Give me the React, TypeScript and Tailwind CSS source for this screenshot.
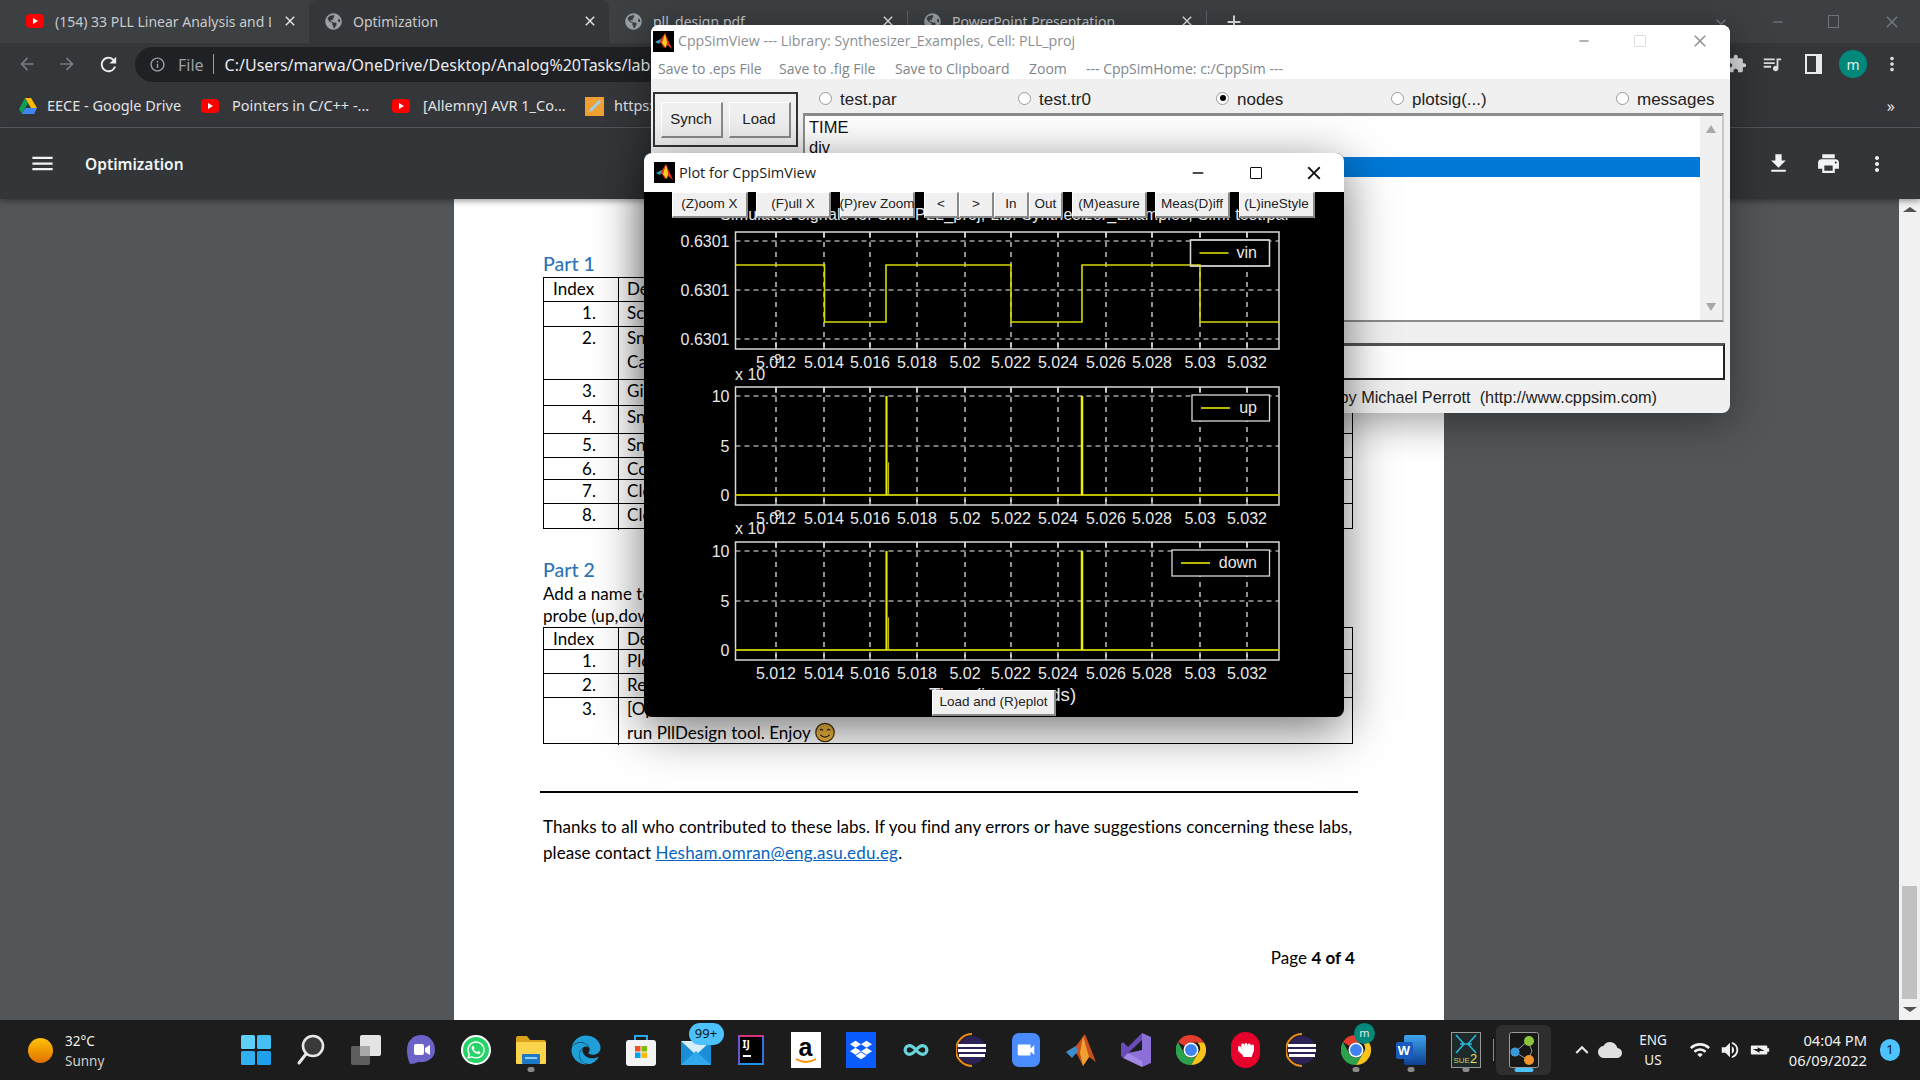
import React from "react";
import { FaGlobeAmericas, FaWhatsapp, FaDropbox, FaHandRock, FaEdge } from "react-icons/fa";
import {
  MdArrowBack, MdArrowForward, MdRefresh, MdInfoOutline, MdMenu, MdFileDownload, MdPrint, MdMoreVert,
  MdExtension, MdQueueMusic, MdClose, MdAdd, MdKeyboardArrowDown, MdRemove, MdVideocam, MdKeyboardArrowUp,
  MdVolumeUp, MdWifi, MdBatteryChargingFull, MdCloud,
} from "react-icons/md";
import { Infinity as InfinityIcon } from "lucide-react";

function Yt() {
  return (
    <svg width="18" height="18" viewBox="0 0 18 18" className="shrink-0">
      <rect x="0" y="2" width="18" height="14" rx="4" fill="#f00" />
      <path d="M7 6l5 3-5 3z" fill="#fff" />
    </svg>
  );
}

function Tab({ icon, title, active, w, pl }: { icon: React.ReactNode; title: string; active?: boolean; w: string; pl: string }) {
  return (
    <div className={`${w} ${pl} h-[43px] flex items-center pr-[11px] pb-[1px] gap-[11px] rounded-t-lg ${active ? "bg-[#35363a]" : ""}`}>
      <div className="w-[18px] flex justify-center shrink-0">{icon}</div>
      <div className="flex-1 overflow-hidden whitespace-nowrap text-[14px] text-[#c8cacc]">{title}</div>
      <MdClose className="text-[#e8eaed] shrink-0" size={16} />
    </div>
  );
}

function Logo() {
  return (
    <svg width="21" height="21" viewBox="0 0 21 21" className="shrink-0">
      <rect width="21" height="21" fill="#000" />
      <path d="M3 11l5-3 4-6 3 7 4 9-5-4-3 3-3-5z" fill="#e8341c" />
      <path d="M9 12l3-9 2 8-1 6z" fill="#f8d020" />
      <path d="M2 11l6-3-2 5z" fill="#2aa5c9" />
    </svg>
  );
}

function Radio({ label, on, w }: { label: string; on?: boolean; w: string }) {
  return (
    <div className={`flex items-center gap-[8px] ${w}`}>
      <div className="w-[13px] h-[13px] rounded-full bg-white border border-[#9a9a9a] flex items-center justify-center mb-[4px] shrink-0">
        {on && <div className="w-[6px] h-[6px] rounded-full bg-black" />}
      </div>
      <span className="text-[17px] text-[#222] whitespace-nowrap">{label}</span>
    </div>
  );
}

function TkBtn({ w, children }: { w: string; children: React.ReactNode }) {
  return (
    <div className={`${w} h-[26px] flex items-center justify-center bg-[#f0f0f0] border-t border-l border-t-white border-l-white border-b-2 border-r-2 border-b-[#8a8a8a] border-r-[#8a8a8a] text-[13.5px] text-[#222] whitespace-nowrap`}>
      {children}
    </div>
  );
}

const TICKS: [number, string][] = [
  [776, "5.012"], [824, "5.014"], [870, "5.016"], [917, "5.018"], [965, "5.02"], [1011, "5.022"],
  [1058, "5.024"], [1106, "5.026"], [1152, "5.028"], [1200, "5.03"], [1247, "5.032"],
];

function Axes({ top, bottom, ys, labels, legend, lx, ly }: { top: number; bottom: number; ys: number[]; labels: string[]; legend: string; lx: number; ly: number }) {
  const lw = 1269.5 - lx;
  const lh = 26;
  return (
    <g fontFamily="Liberation Sans, sans-serif">
      {TICKS.map(([x]) => (
        <line key={x} x1={x} x2={x} y1={top} y2={bottom} stroke="#f0f0f0" strokeWidth="1.2" strokeDasharray="5 5" />
      ))}
      {TICKS.map(([x]) => (
        <g key={x}>
          <line x1={x} x2={x} y1={top} y2={top + 6} stroke="#f0f0f0" strokeWidth="1.2" />
          <line x1={x} x2={x} y1={bottom - 6} y2={bottom} stroke="#f0f0f0" strokeWidth="1.2" />
        </g>
      ))}
      {ys.map((y) => (
        <line key={y} x1={735.5} x2={1279} y1={y} y2={y} stroke="#f0f0f0" strokeWidth="1.2" strokeDasharray="5 4" />
      ))}
      <rect x={735.5} y={top} width={543.5} height={bottom - top} fill="none" stroke="#d8d8d8" strokeWidth="1.5" />
      {ys.map((y, i) => (
        <text key={y} x={729.5} y={y + 6} textAnchor="end" fontSize="16" fill="#e8e8e8">{labels[i]}</text>
      ))}
      {TICKS.map(([x, t]) => (
        <text key={t} x={x} y={bottom + 19} textAnchor="middle" fontSize="16" fill="#e8e8e8">{t}</text>
      ))}
      <rect x={lx} y={ly} width={lw} height={lh} fill="#000" stroke="#d8d8d8" strokeWidth="1.3" />
      <line x1={lx + 9} x2={lx + 38} y1={ly + 13} y2={ly + 13} stroke="#e8e800" strokeWidth="1.6" />
      <text x={1257} y={ly + 18} textAnchor="end" fontSize="16" fill="#e8e8e8">{legend}</text>
    </g>
  );
}

function Spikes({ top, bottom }: { top: number; bottom: number }) {
  const mid = top + (bottom - top) * 0.67;
  return (
    <g>
      <line x1={735.5} x2={1279} y1={bottom} y2={bottom} stroke="#bcbc00" strokeWidth="2" />
      <line x1={886.5} x2={886.5} y1={top} y2={bottom} stroke="#f0f000" strokeWidth="2" />
      <line x1={888.5} x2={888.5} y1={mid} y2={bottom} stroke="#b8b800" strokeWidth="1.2" />
      <line x1={1082} x2={1082} y1={top} y2={bottom} stroke="#f0f000" strokeWidth="2.5" />
    </g>
  );
}

function PlotSvg() {
  return (
    <svg viewBox="644 192 700 525" width="700" height="525" className="block">
      <text x="720" y="220" fontSize="16" fill="#e8e8e8" textLength="570" fontFamily="Liberation Sans, sans-serif">
        Simulated signals for Sim: PLL_proj, Lib: Synthesizer_Examples, Sim: test.par
      </text>
      <Axes top={232} bottom={349} ys={[241, 290, 339]} labels={["0.6301", "0.6301", "0.6301"]} legend="vin" lx={1190.5} ly={240} />
      <polyline
        points="735.5,265 824.5,265 824.5,322 886,322 886,265 1011,265 1011,322 1082,322 1082,265 1200,265 1200,322 1279,322"
        fill="none" stroke="#d8d800" strokeWidth="1.6"
      />
      <rect x="1190.5" y="240" width="79" height="26" fill="none" stroke="#d8d8d8" strokeWidth="1.3" />
      <g fontFamily="Liberation Sans, sans-serif" fill="#e8e8e8">
        <text x="735" y="380" fontSize="16">x 10</text>
        <text x="770" y="363" fontSize="13">-9</text>
        <text x="735" y="534" fontSize="16">x 10</text>
        <text x="770" y="519" fontSize="13">-9</text>
      </g>
      <Axes top={387} bottom={505} ys={[396, 446, 495]} labels={["10", "5", "0"]} legend="up" lx={1192} ly={395} />
      <Spikes top={396} bottom={495} />
      <Axes top={542} bottom={660} ys={[551, 601, 650]} labels={["10", "5", "0"]} legend="down" lx={1172} ly={550} />
      <Spikes top={551} bottom={650} />
      <text x="929" y="701" fontSize="18.6" fill="#e8e8e8" fontFamily="Liberation Sans, sans-serif">Time (in seconds)</text>
    </svg>
  );
}

function PlotWindow() {
  return (
    <div className="absolute z-30 left-[644px] top-[153px] w-[700px] h-[564px] rounded-lg bg-black shadow-[0_12px_50px_rgba(0,0,0,0.55)] overflow-hidden font-['Liberation_Sans',sans-serif]">
      <div className="h-[39px] bg-white flex items-center pl-[10px]">
        <Logo />
        <span className="ml-[4px] text-[14.5px] text-[#1a1a1a] font-['Open_Sans',sans-serif]">Plot for CppSimView</span>
        <div className="ml-auto flex items-center text-[#111]">
          <MdRemove size={18} className="mr-[43px]" />
          <div className="w-[12px] h-[12px] border border-[#111] rounded-[1px] mr-[41px]" />
          <MdClose size={22} className="mr-[19px]" />
        </div>
      </div>
      <PlotSvg />
      <div className="absolute left-[28px] top-[39px] flex">
        <TkBtn w="w-[76px]">(Z)oom X</TkBtn>
        <div className="w-[8px]" />
        <TkBtn w="w-[75px]">(F)ull X</TkBtn>
        <div className="w-[9px]" />
        <TkBtn w="w-[75px]">(P)rev Zoom</TkBtn>
        <div className="w-[9px]" />
        <TkBtn w="w-[35px]">&lt;</TkBtn>
        <TkBtn w="w-[35px]">&gt;</TkBtn>
        <TkBtn w="w-[35px]">In</TkBtn>
        <TkBtn w="w-[34px]">Out</TkBtn>
        <div className="w-[9px]" />
        <TkBtn w="w-[75px]">(M)easure</TkBtn>
        <div className="w-[8px]" />
        <TkBtn w="w-[75px]">Meas(D)iff</TkBtn>
        <div className="w-[9px]" />
        <TkBtn w="w-[76px]">(L)ineStyle</TkBtn>
      </div>
      <div className="absolute left-[288px] top-[537px]">
        <TkBtn w="w-[124px]">Load and (R)eplot</TkBtn>
      </div>
    </div>
  );
}

function MainWindow() {
  return (
    <div className="absolute z-20 left-[651px] top-[25px] w-[1079px] h-[388px] rounded-lg bg-[#f0f0f0] shadow-[0_8px_40px_rgba(0,0,0,0.4)] overflow-hidden font-['Liberation_Sans',sans-serif] flex flex-col">
      <div className="h-[32px] bg-white flex items-center pl-[2px] shrink-0">
        <Logo />
        <span className="ml-[4px] text-[14.2px] text-[#8a8f94] font-['Open_Sans',sans-serif]">CppSimView --- Library: Synthesizer_Examples, Cell: PLL_proj</span>
        <div className="ml-auto flex items-center text-[#999]">
          <MdRemove size={16} className="mr-[42px]" />
          <div className="w-[12px] h-[12px] border border-[#ddd] rounded-[1px] mr-[44px]" />
          <MdClose size={20} className="mr-[20px]" />
        </div>
      </div>
      <div className="h-[22px] bg-white flex items-center pl-[7px] text-[14px] text-[#7d858c] shrink-0 font-['Open_Sans',sans-serif] whitespace-nowrap">
        <span className="w-[121px]">Save to .eps File</span>
        <span className="w-[116px]">Save to .fig File</span>
        <span className="w-[134px]">Save to Clipboard</span>
        <span className="w-[57px]">Zoom</span>
        <span>--- CppSimHome: c:/CppSim ---</span>
      </div>
      <div className="flex pl-[2px] pr-[6px] shrink-0">
        <div className="w-[145px] h-[55px] mt-[13px] border-2 border-[#333] flex items-center justify-center gap-[6px] shrink-0">
          <div className="w-[62px] h-[36px] flex items-center justify-center bg-[#f0f0f0] border-t border-l border-white border-b-2 border-r-2 border-b-[#8a8a8a] border-r-[#8a8a8a] text-[15px] text-[#222]">Synch</div>
          <div className="w-[62px] h-[36px] flex items-center justify-center bg-[#f0f0f0] border-t border-l border-white border-b-2 border-r-2 border-b-[#8a8a8a] border-r-[#8a8a8a] text-[15px] text-[#222]">Load</div>
        </div>
        <div className="ml-[5px] w-[921px] flex flex-col">
          <div className="h-[34px] flex items-center pl-[16px] pt-[8px]">
            <Radio label="test.par" w="w-[199px]" />
            <Radio label="test.tr0" w="w-[198px]" />
            <Radio label="nodes" on w="w-[175px]" />
            <Radio label="plotsig(...)" w="w-[225px]" />
            <Radio label="messages" w="w-[100px]" />
          </div>
          <div className="h-[209px] border-t-[3px] border-l-2 border-r-2 border-b-2 border-t-[#8c8c8c] border-l-[#8c8c8c] border-r-[#c8c8c8] border-b-[#8c8c8c] bg-white flex">
            <div className="flex-1 flex flex-col pt-[1px] text-[16.5px] leading-[20px] text-[#111] pl-[4px] overflow-hidden">
              <div>TIME</div>
              <div>div</div>
              <div className="-ml-[4px] h-[20px] bg-[#0078d7] text-white pl-[4px]">ref</div>
            </div>
            <div className="w-[22px] bg-[#f0f0f0] flex flex-col items-center justify-between py-[9px] shrink-0">
              <div className="w-0 h-0 border-l-[5px] border-r-[5px] border-b-[8px] border-l-transparent border-r-transparent border-b-[#a8a8a8]" />
              <div className="w-0 h-0 border-l-[5px] border-r-[5px] border-t-[8px] border-l-transparent border-r-transparent border-t-[#a8a8a8]" />
            </div>
          </div>
        </div>
      </div>
      <div className="ml-[2px] mr-[5px] mt-[21px] h-[37px] border-2 border-[#222] bg-white shrink-0 border-t-[3px] border-t-[#555]" />
      <div className="flex-1 flex items-center pr-[73px] pt-[1px] justify-end text-[16.3px] text-[#222] whitespace-pre">Plotting package by Michael Perrott  (http://www.cppsim.com)</div>
    </div>
  );
}

function Row({ h, idx, lines }: { h: string; idx?: string; lines: [string, string?] }) {
  return (
    <div className={`${h} flex border-b border-black last:border-b-0`}>
      <div className="w-[75px] border-r border-black text-right pr-[22px] shrink-0">{idx}</div>
      <div className="flex-1 pl-[8px] flex flex-col gap-[2px]">
        {lines.map((l, i) => <div key={i}>{l}</div>)}
      </div>
    </div>
  );
}

function Smile() {
  return (
    <svg width="20" height="21" viewBox="0 0 19 20" className="block">
      <circle cx="9.5" cy="10" r="8.8" fill="#f4b942" stroke="#4a3410" strokeWidth="1.2" />
      <path d="M4.5 8q1.500-2 3 0M11.500 8q1.500-2 3 0" stroke="#3a2a10" strokeWidth="1" fill="none" />
      <path d="M5 12q4.500 5 9 0" stroke="#3a2a10" strokeWidth="1.2" fill="none" />
    </svg>
  );
}

function PdfPage() {
  return (
    <div className="w-[990px] ml-[454px] bg-white h-full pt-[52px] pl-[89px] font-['Lato',sans-serif] text-[17px] text-black tracking-[0.05px] shrink-0">
      <div className="h-[26px] text-[19.5px] text-[#2e74b5] font-medium leading-[26px]">Part 1</div>
      <div className="w-[810px] border border-black h-[252px] leading-[22px]">
        <div className="h-[24px] flex border-b border-black">
          <div className="w-[75px] border-r border-black pl-[9px] shrink-0">Index</div>
          <div className="pl-[8px]">Description</div>
        </div>
        <Row h="h-[25px]" idx="1." lines={["Schematic"]} />
        <Row h="h-[53px]" idx="2." lines={["Snapshot", "Capture"]} />
        <Row h="h-[26px]" idx="3." lines={["Give"]} />
        <Row h="h-[28px]" idx="4." lines={["Snapshot"]} />
        <Row h="h-[24px]" idx="5." lines={["Snapshot"]} />
        <Row h="h-[22px]" idx="6." lines={["Comment"]} />
        <Row h="h-[24px]" idx="7." lines={["Clean"]} />
        <Row h="h-[26px]" idx="8." lines={["Clean"]} />
      </div>
      <div className="h-[26px] mt-[28px] text-[19.5px] text-[#2e74b5] font-medium leading-[26px]">Part 2</div>
      <div className="h-[22px] leading-[22px]">Add a name to the</div>
      <div className="h-[22px] leading-[22px]">probe (up,down)</div>
      <div className="w-[810px] border border-black h-[117px] leading-[22px]">
        <div className="h-[22px] flex border-b border-black">
          <div className="w-[75px] border-r border-black pl-[9px] shrink-0">Index</div>
          <div className="pl-[8px]">Description</div>
        </div>
        <Row h="h-[24px]" idx="1." lines={["Plot"]} />
        <Row h="h-[24px]" idx="2." lines={["Report"]} />
        <Row h="h-[47px]" idx="3." lines={["[Optional]", "run PllDesign tool. Enjoy"]} />
      </div>
      <div className="relative">
        <div className="absolute left-[272px] -top-[22px]"><Smile /></div>
      </div>
      <div className="w-[818px] -ml-[3px] h-[2px] bg-black mt-[47px]" />
      <div className="w-[820px] mt-[21px] leading-[26px]">
        <div className="whitespace-nowrap">Thanks to all who contributed to these labs. If you find any errors or have suggestions concerning these labs,</div>
        <div className="whitespace-nowrap">please contact <span className="text-[#0563c1] underline tracking-[0.2px]">Hesham.omran@eng.asu.edu.eg</span>.</div>
      </div>
      <div className="w-[812px] mt-[79px] text-right">Page <b>4 of 4</b></div>
    </div>
  );
}

function TaskItem({ children, dot, active }: { children: React.ReactNode; dot?: boolean; active?: boolean }) {
  return (
    <div className={`relative w-[55px] h-[50px] flex items-center justify-center shrink-0 ${active ? "bg-[#2e2e2e] rounded-md" : ""}`}>
      {children}
      {dot && <div className="absolute bottom-[3px] left-1/2 -translate-x-1/2 w-[7px] h-[5px] rounded-full bg-[#8a8a8a]" />}
      {active && <div className="absolute bottom-[3px] left-1/2 -translate-x-1/2 w-[19px] h-[4px] rounded-full bg-[#4cc2ff]" />}
    </div>
  );
}

function WinLogo() {
  return (
    <svg width="30" height="30" viewBox="0 0 30 30">
      <rect x="0" y="0" width="14" height="14" rx="1.5" fill="#5fd0f8" /><rect x="16" y="0" width="14" height="14" rx="1.5" fill="#45c0f5" />
      <rect x="0" y="16" width="14" height="14" rx="1.5" fill="#32b0f0" /><rect x="16" y="16" width="14" height="14" rx="1.5" fill="#1fa0ec" />
    </svg>
  );
}
function SearchI() {
  return (
    <svg width="30" height="32" viewBox="0 0 30 32"><circle cx="17" cy="12" r="10" fill="#3a3a3a" stroke="#e8e8e8" strokeWidth="2.6" /><path d="M10 20L3 29" stroke="#e8e8e8" strokeWidth="3" strokeLinecap="round" /></svg>
  );
}
function TaskView() {
  return (
    <svg width="30" height="30" viewBox="0 0 30 30"><rect x="0" y="11" width="19" height="19" rx="2" fill="#5e5e5e" /><rect x="9" y="0" width="21" height="21" rx="2" fill="#e4e4e4" /><rect x="9" y="11" width="10" height="10" fill="#a8a8a8" /></svg>
  );
}
function Chat() {
  return (
    <svg width="30" height="32" viewBox="0 0 30 32"><path d="M15 1C7 1 1 7 1 16c0 5 1 10 3 14 3 0 6-1 8-2 8 1 17-3 17-12C29 7 23 1 15 1z" fill="#6c63c8" /><rect x="8" y="10" width="10" height="11" rx="2" fill="#fff" /><path d="M19 14l5-3v10l-5-3z" fill="#fff" /></svg>
  );
}
function Folder() {
  return (
    <svg width="30" height="30" viewBox="0 0 30 30"><path d="M0 3a2 2 0 012-2h9l3 4h14a2 2 0 012 2v21H0z" fill="#d9a219" /><rect y="7" width="30" height="22" rx="1" fill="#fbd44b" /><rect x="6" y="19" width="18" height="10" rx="1" fill="#1e78c8" /><rect x="9" y="22" width="12" height="2" fill="#8fd0ff" /></svg>
  );
}
function Store() {
  return (
    <svg width="30" height="32" viewBox="0 0 30 32"><path d="M9 6V2h12v4" stroke="#28a8ea" strokeWidth="2" fill="none" /><rect y="6" width="30" height="26" rx="3" fill="#f4f4f4" /><rect x="9" y="12" width="5.5" height="5.5" fill="#f25022" /><rect x="15.5" y="12" width="5.5" height="5.5" fill="#7fba00" /><rect x="9" y="18.5" width="5.5" height="5.5" fill="#00a4ef" /><rect x="15.5" y="18.5" width="5.5" height="5.5" fill="#ffb900" /></svg>
  );
}
function Mail() {
  return (
    <div className="relative w-[30px] h-[30px]">
      <svg width="30" height="30" viewBox="0 0 30 30"><path d="M0 6l15 12L30 6v24H0z" fill="#1a8fd8" /><path d="M0 6h30L15 20z" fill="#d8eefa" /><path d="M0 30l15-14 15 14z" fill="#30a8ea" /></svg>
      <div className="absolute -top-[12px] left-[8px] w-[35px] h-[22px] rounded-full bg-[#4cc2ff] text-[#111] text-[13px] flex items-center justify-center">99+</div>
    </div>
  );
}
function IJ() {
  return (
    <div className="w-[26px] h-[30px] bg-black border-2 border-[#d7337b] border-b-[#1e90e8] border-l-[#6b57d2] border-r-[#3a6ee8] text-white text-[10px] font-bold pl-[3px] leading-[14px]">IJ<div className="w-[8px] h-[1.5px] bg-white mt-[4px]" /></div>
  );
}
function Amazon() {
  return (
    <div className="w-[30px] h-[36px] bg-white flex flex-col items-center justify-center text-black font-bold text-[25px] leading-[22px] font-['Liberation_Sans',sans-serif]">
      a
      <svg width="22" height="6" viewBox="0 0 22 6"><path d="M1 1q10 6 20 0" stroke="#f79400" strokeWidth="2" fill="none" /></svg>
    </div>
  );
}
function Eclipse() {
  return (
    <svg width="30" height="34" viewBox="0 0 30 34"><path d="M16 1a16 16 0 000 32" fill="none" stroke="#e88a1a" strokeWidth="2" /><circle cx="16" cy="17" r="14" fill="#2c2255" /><rect x="2" y="11" width="28" height="3" fill="#fff" /><rect x="2" y="16" width="28" height="3" fill="#fff" /><rect x="3" y="21" width="26" height="3" fill="#fff" /></svg>
  );
}
function Matlab() {
  return (
    <svg width="30" height="32" viewBox="0 0 30 32"><path d="M0 18l10-6 9-12 11 28-7-5-6 9-6-12z" fill="#c8501c" /><path d="M17 2l6 21-6 9-3-13z" fill="#f0a030" /><path d="M0 18l10-6 2 5-6 7z" fill="#3a8ed0" /></svg>
  );
}
function VS() {
  return (
    <svg width="30" height="34" viewBox="0 0 30 34"><path d="M21 0l9 4v26l-9 4L7 20l14-3z" fill="#8d6fd8" /><path d="M21 0L7 14 2 9 0 11v12l2 2 19-18z" fill="#6a4cb8" /><path d="M21 34L2 25l5-5 14 8z" fill="#a488e8" /></svg>
  );
}
function Chrome({ size = 30 }: { size?: number }) {
  return (
    <svg width={size} height={size} viewBox="0 0 30 30">
      <path d="M15 0a15 15 0 0113 7.5H15A7.5 7.5 0 008.5 11L2 7A15 15 0 0115 0z" fill="#e33b2e" />
      <path d="M28 7.500a15 15 0 01-13 22.500l6.500-11a7.500 7.500 0 000-11.500z" fill="#f8c41c" />
      <path d="M15 30A15 15 0 012 7l6.500 12a7.500 7.500 0 0013 0z" fill="#2ca24c" />
      <circle cx="15" cy="15" r="7.500" fill="#fff" /><circle cx="15" cy="15" r="6" fill="#3f83f0" />
    </svg>
  );
}
function Word() {
  return (
    <div className="relative w-[30px] h-[30px]">
      <div className="absolute right-0 top-0 w-[22px] h-[30px] rounded-[2px] bg-gradient-to-b from-[#41a5ee] to-[#103f91]" />
      <div className="absolute left-0 top-[7px] w-[17px] h-[17px] rounded-[2px] bg-[#185abd] text-white text-[13px] font-bold flex items-center justify-center font-['Liberation_Sans',sans-serif]">W</div>
    </div>
  );
}
function Sue() {
  return (
    <div className="relative w-[30px] h-[36px] bg-[#1e2a2a] border border-[#999] overflow-hidden">
      <svg width="28" height="22" viewBox="0 0 28 22"><path d="M4 2l8 9-8 9M24 2l-8 9 8 9M8 11h12" stroke="#29b6d8" strokeWidth="1.6" fill="none" /></svg>
      <div className="absolute bottom-0 left-[2px] text-[8px] leading-[12px] text-[#c8d060] font-['Liberation_Sans',sans-serif]">SUE<span className="text-[13px] text-[#e8e060]">2</span></div>
    </div>
  );
}
function CppSimIcon() {
  return (
    <svg width="30" height="36" viewBox="0 0 30 36">
      <rect x="0.500" y="0.500" width="29" height="35" rx="2" fill="#181818" stroke="#9a9a9a" />
      <path d="M6 20L19 9M6 20l13 8M19 9l4 10-4 9" stroke="#999" fill="none" />
      <circle cx="6" cy="20" r="4.500" fill="#3a9ad9" /><circle cx="20" cy="9" r="5" fill="#8cc63f" /><circle cx="20" cy="28" r="5" fill="#f0932b" />
    </svg>
  );
}

function Taskbar() {
  return (
    <div className="h-[60px] bg-[#1c1c1c] flex items-center shrink-0 text-[#f0f0f0] relative font-['Noto_Sans',sans-serif]">
      <div className="w-[228px] flex items-center pl-[28px] gap-[12px] shrink-0">
        <div className="w-[25px] h-[25px] rounded-full bg-gradient-to-b from-[#ffc107] to-[#e07000]" />
        <div className="text-[13.5px] leading-[20px] pt-[1px]">
          <div>32°C</div>
          <div className="text-[#cfcfcf]">Sunny</div>
        </div>
      </div>
      <TaskItem><WinLogo /></TaskItem>
      <TaskItem><SearchI /></TaskItem>
      <TaskItem><TaskView /></TaskItem>
      <TaskItem><Chat /></TaskItem>
      <TaskItem><div className="w-[30px] h-[30px] rounded-full bg-[#25d366] border-2 border-white flex items-center justify-center"><FaWhatsapp size={20} className="text-white" /></div></TaskItem>
      <TaskItem dot><Folder /></TaskItem>
      <TaskItem><FaEdge size={30} className="text-[#1f9fd8]" /></TaskItem>
      <TaskItem><Store /></TaskItem>
      <TaskItem><Mail /></TaskItem>
      <TaskItem><IJ /></TaskItem>
      <TaskItem><Amazon /></TaskItem>
      <TaskItem><div className="w-[30px] h-[36px] bg-[#0a5cff] flex items-center justify-center"><FaDropbox size={22} className="text-white" /></div></TaskItem>
      <TaskItem><InfinityIcon size={26} strokeWidth={3} className="text-[#68d4dc]" /></TaskItem>
      <TaskItem><Eclipse /></TaskItem>
      <TaskItem><div className="w-[28px] h-[34px] rounded-[7px] bg-[#4a8cff] flex items-center justify-center"><MdVideocam size={22} className="text-white" /></div></TaskItem>
      <TaskItem><Matlab /></TaskItem>
      <TaskItem><VS /></TaskItem>
      <TaskItem><Chrome /></TaskItem>
      <TaskItem><div className="w-[29px] h-[36px] rounded-full bg-[#e8002d] flex items-center justify-center"><FaHandRock size={16} className="text-white" /></div></TaskItem>
      <TaskItem><Eclipse /></TaskItem>
      <TaskItem dot>
        <Chrome />
        <div className="absolute -top-[2px] left-[26px] w-[21px] h-[21px] rounded-full bg-[#00897b] text-[11px] text-[#e0f0ee] flex items-center justify-center">m</div>
      </TaskItem>
      <TaskItem dot><Word /></TaskItem>
      <TaskItem dot><Sue /></TaskItem>
      <div className="w-[1px] h-[22px] bg-[#8a8a8a] mr-[2px]" />
      <TaskItem active><CppSimIcon /></TaskItem>
      <div className="ml-[18px] flex items-center">
        <MdKeyboardArrowUp size={26} className="text-[#e8e8e8]" />
        <MdCloud size={24} className="text-[#e0e0e0] ml-[3px]" />
      </div>
      <div className="ml-[13px] w-[36px] text-center text-[13.5px] leading-[20px]"><div>ENG</div><div>US</div></div>
      <MdWifi size={22} className="ml-[18px]" />
      <MdVolumeUp size={22} className="ml-[8px]" />
      <MdBatteryChargingFull size={22} className="ml-[8px] rotate-90" />
      <div className="ml-[6px] w-[90px] text-right text-[14.7px] leading-[20px]"><div>04:04 PM</div><div>06/09/2022</div></div>
      <div className="ml-[13px] w-[20px] h-[22px] rounded-full bg-[#4cc2ff] text-[#111] text-[13px] flex items-center justify-center">1</div>
    </div>
  );
}

export default function App() {
  const globe = <FaGlobeAmericas size={17} className="text-[#9aa0a6]" />;
  return (
    <div className="relative w-[1920px] h-[1080px] overflow-hidden bg-[#525659] flex flex-col font-['Noto_Sans',sans-serif] text-white">
      <div className="h-[43px] bg-[#3c4043] flex pl-[8px] shrink-0 items-center">
        <Tab w="w-[301px]" pl="pl-[18px]" icon={<Yt />} title="(154) 33 PLL Linear Analysis and Loop" />
        <Tab w="w-[300px]" pl="pl-[15px]" active icon={globe} title="Optimization" />
        <Tab w="w-[298px]" pl="pl-[15px]" icon={globe} title="pll_design.pdf" />
        <div className="w-[1px] h-[22px] bg-[#5f6368]" />
        <Tab w="w-[298px]" pl="pl-[15px]" icon={globe} title="PowerPoint Presentation" />
        <div className="w-[1px] h-[22px] bg-[#5f6368]" />
        <MdAdd size={22} className="ml-[16px] text-[#e8eaed]" />
        <div className="ml-auto flex items-center text-[#6f7377]">
          <MdKeyboardArrowDown size={20} className="mr-[39px]" />
          <MdRemove size={16} className="mr-[42px]" />
          <div className="w-[11px] h-[13px] border border-[#6f7377] mr-[43px]" />
          <MdClose size={20} className="mr-[18px]" />
        </div>
      </div>
      <div className="h-[42px] bg-[#35363a] flex items-center shrink-0 pl-[17px]">
        <MdArrowBack size={20} className="text-[#777b7f]" />
        <MdArrowForward size={20} className="text-[#777b7f] ml-[20px]" />
        <MdRefresh size={23} className="text-[#e8eaed] ml-[20px]" />
        <div className="ml-[15px] w-[1590px] h-[35px] rounded-full bg-[#202124] flex items-center pl-[14px] text-[16px] whitespace-nowrap overflow-hidden shrink-0">
          <MdInfoOutline size={17} className="text-[#9aa0a6]" />
          <span className="ml-[12px] text-[#9aa0a6] pt-[1px]">File</span>
          <div className="w-[1px] h-[20px] bg-[#9aa0a6] ml-[9px] mr-[11px]" />
          <span className="text-[#e8eaed] pt-[1px]">C:/Users/marwa/OneDrive/Desktop/Analog%20Tasks/labs</span>
        </div>
        <div className="flex items-center ml-[2px] text-[#dadce0]">
          <MdExtension size={20} />
          <MdQueueMusic size={22} className="ml-[14px]" />
          <div className="w-[17px] h-[20px] border-2 border-[#e8eaed] bg-[#35363a] ml-[22px] border-r-[6px]" />
          <div className="ml-[17px] w-[28px] h-[28px] rounded-full bg-[#00897b] text-[14px] text-[#e0f0ee] flex items-center justify-center">m</div>
          <MdMoreVert size={22} className="ml-[14px]" />
        </div>
      </div>
      <div className="h-[43px] bg-[#35363a] border-b border-[#5a5d61] flex items-center shrink-0 pl-[19px] text-[14.5px] text-[#e0e2e4] whitespace-nowrap">
        <svg width="18" height="18" viewBox="0 0 18 18" className="shrink-0">
          <path d="M6 1h6l6 10h-6z" fill="#fbbc04" /><path d="M6 1L0 12l3 5 6-11z" fill="#0f9d58" /><path d="M3 17h12l3-6H6.500z" fill="#4285f4" />
        </svg>
        <span className="ml-[10px] w-[154px]">EECE - Google Drive</span>
        <Yt />
        <span className="ml-[13px] w-[160px]">Pointers in C/C++ -...</span>
        <Yt />
        <span className="ml-[13px] w-[162px]">[Allemny] AVR 1_Co...</span>
        <div className="w-[19px] h-[19px] bg-[#f0a030] shrink-0 flex items-center justify-center">
          <svg width="15" height="15" viewBox="0 0 15 15"><path d="M12 1l2 2-9 9-3 1 1-3z" fill="#9ad0ec" /></svg>
        </div>
        <span className="ml-[10px]">https:</span>
        <span className="ml-auto mr-[25px] text-[16px]">»</span>
      </div>
      <div className="h-[71px] bg-[#323639] flex items-center shrink-0 pl-[29px] relative z-10 shadow-[0_2px_6px_rgba(0,0,0,0.4)]">
        <MdMenu size={27} className="text-[#f1f3f4]" />
        <span className="ml-[29px] pt-[2px] text-[15.5px] font-semibold text-[#f1f3f4]">Optimization</span>
        <div className="ml-auto flex items-center text-[#f1f3f4]">
          <MdFileDownload size={25} className="mr-[25px]" />
          <MdPrint size={25} className="mr-[24px]" />
          <MdMoreVert size={24} className="mr-[31px]" />
        </div>
      </div>
      <div className="flex-1 flex overflow-hidden min-h-0">
        <PdfPage />
        <div className="ml-auto w-[21px] bg-[#f1f1f1] flex flex-col items-center justify-between py-[8px] relative shrink-0">
          <div className="w-0 h-0 border-l-[7px] border-r-[7px] border-b-[5px] border-l-transparent border-r-transparent border-b-[#505050]" />
          <div className="absolute left-[3px] right-[3px] top-[687px] h-[113px] bg-[#c1c1c1]" />
          <div className="w-0 h-0 border-l-[7px] border-r-[7px] border-t-[5px] border-l-transparent border-r-transparent border-t-[#505050]" />
        </div>
      </div>
      <Taskbar />
      <MainWindow />
      <PlotWindow />
    </div>
  );
}
